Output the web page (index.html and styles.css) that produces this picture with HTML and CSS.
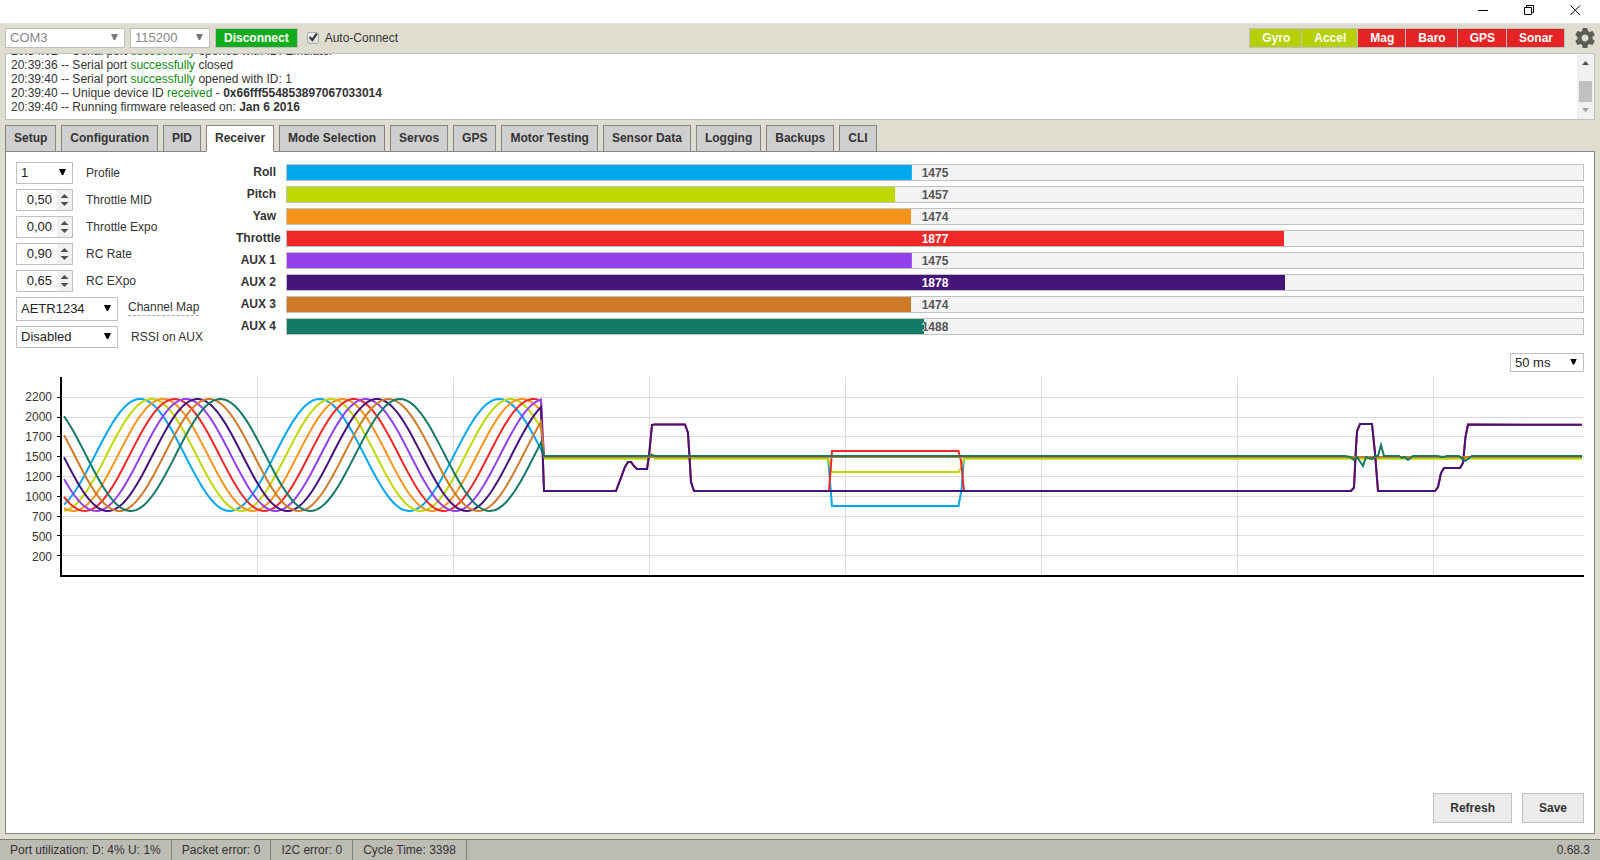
FILE: index.html
```html
<!DOCTYPE html>
<html lang="en">
<head>
<meta charset="utf-8">
<title>Configurator</title>
<link rel="stylesheet" href="styles.css">
</head>
<body>
<header class="titlebar">
  <button class="win-btn" aria-label="Minimize"><svg viewBox="0 0 11 11"><path d="M0 5.5H10"/></svg></button>
  <button class="win-btn" aria-label="Restore"><svg viewBox="0 0 11 11"><path d="M.5 2.5H7.5V9.5H.5ZM2.5 2.5V.5H9.5V7.5H7.5"/></svg></button>
  <button class="win-btn" aria-label="Close"><svg viewBox="0 0 11 11"><path d="M.5 .5L10 10M10 .5L.5 10"/></svg></button>
</header>

<div class="toolbar">
  <span class="select port"><select aria-label="Port" disabled><option>COM3</option></select></span>
  <span class="select baud"><select aria-label="Baud rate" disabled><option>115200</option></select></span>
  <button class="connect">Disconnect</button>
  <label class="auto"><input type="checkbox" checked>Auto-Connect</label>
  <ul class="sensors">
    <li class="on">Gyro</li><li class="on">Accel</li><li>Mag</li><li>Baro</li><li>GPS</li><li>Sonar</li>
  </ul>
  <button class="gear" aria-label="Options"><svg viewBox="2 2 20 20"><path d="M19.43 12.98c.04-.32.07-.64.07-.98s-.03-.66-.07-.98l2.11-1.65c.19-.15.24-.42.12-.64l-2-3.46c-.12-.22-.39-.3-.61-.22l-2.49 1c-.52-.4-1.08-.73-1.69-.98l-.38-2.65C14.46 2.18 14.25 2 14 2h-4c-.25 0-.46.18-.49.42l-.38 2.65c-.61.25-1.17.59-1.69.98l-2.49-1c-.23-.09-.49 0-.61.22l-2 3.46c-.13.22-.07.49.12.64l2.11 1.65c-.04.32-.07.65-.07.98s.03.66.07.98l-2.11 1.65c-.19.15-.24.42-.12.64l2 3.46c.12.22.39.3.61.22l2.49-1c.52.4 1.08.73 1.69.98l.38 2.65c.03.24.24.42.49.42h4c.25 0 .46-.18.49-.42l.38-2.65c.61-.25 1.17-.59 1.69-.98l2.49 1c.23.09.49 0 .61-.22l2-3.46c.12-.22.07-.49-.12-.64l-2.11-1.65zM12 15.5c-1.93 0-3.5-1.57-3.5-3.5s1.57-3.5 3.5-3.5 3.5 1.57 3.5 3.5-1.57 3.5-3.5 3.5z"/></svg></button>
</div>

<section class="log">
  <div class="log-lines">
    <p>20:34:02 -- Serial port <em>successfully</em> opened with ID: Emulator</p>
    <p>20:39:36 -- Serial port <em>successfully</em> closed</p>
    <p>20:39:40 -- Serial port <em>successfully</em> opened with ID: 1</p>
    <p>20:39:40 -- Unique device ID <em>received</em> - <strong>0x66fff554853897067033014</strong></p>
    <p>20:39:40 -- Running firmware released on: <strong>Jan 6 2016</strong></p>
  </div>
  <div class="scrollbar" aria-hidden="true"><i class="up"></i><i class="thumb"></i><i class="down"></i></div>
</section>

<nav class="tabs">
  <a href="#setup">Setup</a><a href="#configuration">Configuration</a><a href="#pid">PID</a><a href="#receiver" class="active">Receiver</a><a href="#modes">Mode Selection</a><a href="#servos">Servos</a><a href="#gps">GPS</a><a href="#motors">Motor Testing</a><a href="#sensors">Sensor Data</a><a href="#logging">Logging</a><a href="#backups">Backups</a><a href="#cli">CLI</a>
</nav>

<main class="panel">
  <div class="top">
    <form class="settings">
      <div class="row"><span class="select narrow"><select id="profile"><option>1</option></select></span><label for="profile">Profile</label></div>
      <div class="row"><span class="number"><input id="mid" type="text" inputmode="decimal" value="0,50"><span class="spin"><button type="button" aria-label="Increase"></button><button type="button" aria-label="Decrease"></button></span></span><label for="mid">Throttle MID</label></div>
      <div class="row"><span class="number"><input id="texpo" type="text" inputmode="decimal" value="0,00"><span class="spin"><button type="button" aria-label="Increase"></button><button type="button" aria-label="Decrease"></button></span></span><label for="texpo">Throttle Expo</label></div>
      <div class="row"><span class="number"><input id="rate" type="text" inputmode="decimal" value="0,90"><span class="spin"><button type="button" aria-label="Increase"></button><button type="button" aria-label="Decrease"></button></span></span><label for="rate">RC Rate</label></div>
      <div class="row"><span class="number"><input id="expo" type="text" inputmode="decimal" value="0,65"><span class="spin"><button type="button" aria-label="Increase"></button><button type="button" aria-label="Decrease"></button></span></span><label for="expo">RC EXpo</label></div>
      <div class="row map"><span class="select wide"><select id="map"><option>AETR1234</option></select></span><label for="map"><span class="hint">Channel Map</span></label></div>
      <div class="row rssi"><span class="select wide"><select id="rssi"><option>Disabled</option></select></span><label for="rssi">RSSI on AUX</label></div>
    </form>
    <div class="bars" id="bars"></div>
  </div>

  <div class="rate"><span class="select"><select aria-label="Refresh rate"><option>50 ms</option></select></span></div>

  <div class="chart">
    <div class="scale"><span>2200</span><span>2000</span><span>1700</span><span>1500</span><span>1200</span><span>1000</span><span>700</span><span>500</span><span>200</span></div>
    <svg class="plot" viewBox="0 0 1527 200" preserveAspectRatio="none">
      <path class="grid" d="M5 20.5H1527M5 40.5H1527M5 59.5H1527M5 79.5H1527M5 99.5H1527M5 119.5H1527M5 139.5H1527M5 158.5H1527M5 178.5H1527M200.5 0V198M396.5 0V198M592.5 0V198M788.5 0V198M984.5 0V198M1180.5 0V198M1376.5 0V198"/>
      <path class="ticks" d="M0 20.5H4M0 40.5H4M0 59.5H4M0 79.5H4M0 99.5H4M0 119.5H4M0 139.5H4M0 158.5H4M0 178.5H4"/>
      <g id="lines"></g>
      <path class="axis" d="M4 0V199H1527"/>
    </svg>
  </div>

  <div class="actions"><button>Refresh</button><button>Save</button></div>
</main>

<footer class="status">
  <span>Port utilization: D: 4% U: 1%</span><span>Packet error: 0</span><span>I2C error: 0</span><span>Cycle Time: 3398</span>
  <span class="version">0.68.3</span>
</footer>
<script src="receiver.js"></script>
</body>
</html>
```
FILE: styles.css
```css
* { box-sizing: border-box; }
body {
  margin: 0;
  min-height: 100vh;
  display: flex;
  flex-direction: column;
  background: #deddcf;
  color: #333;
  font: 12px/14px "Liberation Sans", Arial, sans-serif;
}
p, ul { margin: 0; padding: 0; }
button, select, input { font: inherit; color: inherit; border-radius: 0; margin: 0; }

.titlebar {
  display: flex;
  justify-content: flex-end;
  gap: 34px;
  height: 23px;
  padding: 5px 18px 0 0;
  background: #fff;
}
.win-btn { width: 12px; height: 11px; padding: 0; border: 0; background: none; }
.win-btn svg { display: block; width: 11px; height: 11px; fill: none; stroke: #000; }

.toolbar { display: flex; align-items: center; gap: 5px; padding: 5px 5px; }
.select { position: relative; display: inline-flex; }
.select select {
  appearance: none;
  width: 100%;
  height: 22px;
  padding: 0 4px;
  border: 1px solid #c0c0c0;
  background: #fff;
  color: #222;
  font-size: 13px;
}
.select::after {
  content: "";
  position: absolute;
  right: 7px;
  top: 50%;
  width: 7px;
  height: 6px;
  margin-top: -4px;
  background: #000;
  clip-path: polygon(0 0, 100% 0, 60% 100%, 40% 100%);
  pointer-events: none;
}
.toolbar .select select { height: 20px; color: #888; opacity: 1; }
.toolbar .select::after { background: #777; }
.port { width: 120px; }
.baud { width: 80px; }
.connect {
  height: 20px;
  padding: 0 8px;
  border: 1px solid #c0c0c0;
  background: #12ab1c;
  color: #fff;
  font-weight: bold;
}
.auto { display: flex; align-items: center; gap: 6px; margin-left: 4px; }
.auto input {
  appearance: none;
  position: relative;
  width: 12px;
  height: 12px;
  border: 1px solid #aaa;
  border-radius: 2px;
  background: linear-gradient(#eee, #ddd);
}
.auto input:checked::after {
  content: "";
  position: absolute;
  left: 1px;
  top: 0;
  width: 9px;
  height: 9px;
  background: #333;
  clip-path: polygon(0 50%, 18% 36%, 38% 58%, 80% 0, 100% 14%, 42% 96%);
}
.sensors {
  display: flex;
  gap: 1px;
  margin-left: auto;
  border: 1px solid #c0c0c0;
  background: #c0c0c0;
  list-style: none;
  color: #fff;
  font-weight: bold;
  line-height: 18px;
}
.sensors li { padding: 0 11px 0 12px; background: #e42424; }
.sensors .on { background: #b5cf00; }
.gear { width: 20px; height: 20px; margin-left: 5px; padding: 0; border: 0; background: none; }
.gear svg { display: block; width: 20px; height: 20px; fill: #5d5c55; }

.log {
  display: flex;
  height: 67px;
  margin: 0 5px;
  border: 1px solid #c0c0c0;
  background: #fff;
}
.log-lines {
  flex: 1;
  display: flex;
  flex-direction: column;
  justify-content: flex-end;
  overflow: hidden;
  padding: 0 5px 5px;
}
.log em { color: #0f8a0f; font-style: normal; }
.scrollbar {
  display: flex;
  flex-direction: column;
  align-items: center;
  width: 17px;
  padding: 7px 0;
  background: #f0f0f0;
}
.up, .down { width: 7px; height: 4px; background: #505050; clip-path: polygon(50% 0, 100% 100%, 0 100%); }
.down { margin-top: auto; background: #a0a0a0; clip-path: polygon(0 0, 100% 0, 50% 100%); }
.thumb { width: 13px; height: 21px; margin-top: 16px; background: #c0c0c0; }

.tabs { display: flex; gap: 5px; margin: 5px 5px 0; }
.tabs a {
  height: 27px;
  padding: 0 8px;
  border: 1px solid #858585;
  background: #cfcfcf;
  color: #333;
  font-weight: bold;
  line-height: 24px;
  text-decoration: none;
  margin-bottom: -1px;
}
.tabs .active { position: relative; border-bottom-color: #fff; background: #fff; }

.panel {
  flex: 1;
  display: flex;
  flex-direction: column;
  margin: 0 5px 5px;
  padding: 10px;
  border: 1px solid #858585;
  background: #fff;
}
.top { display: flex; }
.settings { display: flex; flex-direction: column; gap: 5px; width: 220px; }
.row { display: flex; align-items: center; gap: 13px; }
.row label { line-height: 20px; padding-bottom: 1px; }
.narrow, .number { width: 57px; }
.wide { width: 102px; }
.map { gap: 10px; }
.map select { height: 24px; }
.map label { padding-bottom: 4px; }
.hint { display: block; line-height: 16px; border-bottom: 1px dashed #aaa; }
.number { position: relative; display: flex; height: 22px; border: 1px solid #c0c0c0; }
.number input { width: 40px; padding: 0 5px 1px 0; border: 0; background: #fff; color: #222; font-size: 13px; text-align: right; }
.spin { flex: 1; display: flex; flex-direction: column; align-items: center; justify-content: center; gap: 4px; background: #f0f0f0; }
.spin button { width: 8px; height: 4px; padding: 0; border: 0; background: #505050; clip-path: polygon(50% 0, 100% 100%, 0 100%); }
.spin button + button { clip-path: polygon(0 0, 100% 0, 50% 100%); }

.bars { flex: 1; display: flex; flex-direction: column; gap: 5px; padding-top: 2px; }
.bar { display: flex; gap: 10px; height: 17px; font-weight: bold; }
.bar-name { width: 40px; line-height: 16px; text-align: right; white-space: nowrap; }
.track {
  position: relative;
  flex: 1;
  border: 1px solid #c0c0c0;
  background: #f3f3f3;
  color: #555;
  text-align: center;
  line-height: 16px;
}
.fill {
  position: absolute;
  inset: 0;
  background: var(--color);
  color: #fff;
  clip-path: inset(0 calc(100% - var(--level)) 0 0);
}

.rate { display: flex; justify-content: flex-end; margin: 5px 0; }
.rate .select { width: 74px; }
.rate select { height: 19px; }

.chart { display: flex; gap: 5px; }
.scale {
  display: flex;
  flex-direction: column;
  justify-content: space-between;
  width: 36px;
  padding: 10px 0 12px;
  line-height: 20px;
  text-align: right;
}
.plot { flex: 1; min-width: 0; height: 200px; fill: none; }
.plot path { vector-effect: non-scaling-stroke; }
.grid { stroke: #dcdcdc; }
.ticks { stroke: #000; }
.axis { stroke: #000; stroke-width: 2px; }
#lines { stroke-width: 2px; }

.actions { display: flex; justify-content: flex-end; gap: 10px; margin-top: auto; }
.actions button {
  height: 30px;
  padding: 0 16px;
  border: 1px solid #c0c0c0;
  background: #ebebeb;
  font-weight: bold;
}

.status { display: flex; height: 21px; border-top: 1px solid #7f7e76; background: #bdbcb3; line-height: 20px; }
.status span { padding: 0 10px; border-right: 1px solid #7f7e76; }
.status .version { margin-left: auto; border: 0; }
```
FILE: receiver.js
```js
const channels = [
  { name: 'Roll', value: 1475, color: '#00a8f0' },
  { name: 'Pitch', value: 1457, color: '#c0d800' },
  { name: 'Yaw', value: 1474, color: '#f8941c' },
  { name: 'Throttle', value: 1877, color: '#f02828' },
  { name: 'AUX 1', value: 1475, color: '#9440ed' },
  { name: 'AUX 2', value: 1878, color: '#45147a' },
  { name: 'AUX 3', value: 1474, color: '#cf7a26' },
  { name: 'AUX 4', value: 1488, color: '#147a66' }
];
const MIN = 800, MAX = 2200;

document.getElementById('bars').innerHTML = channels.map(c => {
  const level = (c.value - MIN) / (MAX - MIN) * 100;
  return `<div class="bar"><span class="bar-name">${c.name}</span>` +
    `<div class="track">${c.value}<div class="fill" aria-hidden="true" style="--level:${level}%;--color:${c.color}">${c.value}</div></div></div>`;
}).join('');

const stick = [[487,114],[559,114],[568,90],[571,85],[574,85],[577,89],[580,92],[590,92],[592,79],[595,48],[597,47.5],[628,47.5],[631,56],[632.5,80],[634,105],[637,114]];
const tail = [[1294,114],[1297,110.5],[1298.7,76],[1300,54.5],[1303,47],[1315,47],[1318,76],[1321,114],[1378,114],[1381,110],[1384,96],[1387,91],[1403,91],[1406,86],[1408.5,60],[1411,47.5],[1525,47.8]];
const recorded = [
  [[487,80],[771,80],[775,129],[901.5,129],[904.5,113],[907,80],[1525,80]],
  [[487,81.7],[592,81.7],[595,77],[598,81.7],[771,81.7],[775,95],[901.5,95],[904,91],[907,81.7],[1525,81.7]],
  [[487,80],[1525,80]],
  [...stick, [772,114],[775,74],[901.5,74],[904,84],[907,114], ...tail],
  [[487,80],[1525,80]],
  [...stick, ...tail],
  [[487,80],[1525,80]],
  [[487,79],[592,79],[595,78],[598,79],[1288,79],[1293,80],[1297,83],[1300,80],[1306,89],[1309,80],[1315,82],[1318,79],[1321,79],[1324,68],[1327,79],[1342,79],[1345,81],[1348,80],[1351,83],[1356,79],[1380,79],[1386,80],[1390,79],[1402,79],[1408,84],[1415,79],[1525,79]]
];

document.getElementById('lines').innerHTML = channels.map((c, i) => {
  const points = [];
  for (let x = 7; x <= 484; x += 3) {
    points.push([x, (78 - 56 * Math.cos((x - 83 - 11.5 * i) / 179.5 * 2 * Math.PI)).toFixed(1)]);
  }
  points.push(...recorded[i]);
  return `<path stroke="${c.color}" d="M${points.map(p => p.join(' ')).join('L')}"/>`;
}).join('');
```
